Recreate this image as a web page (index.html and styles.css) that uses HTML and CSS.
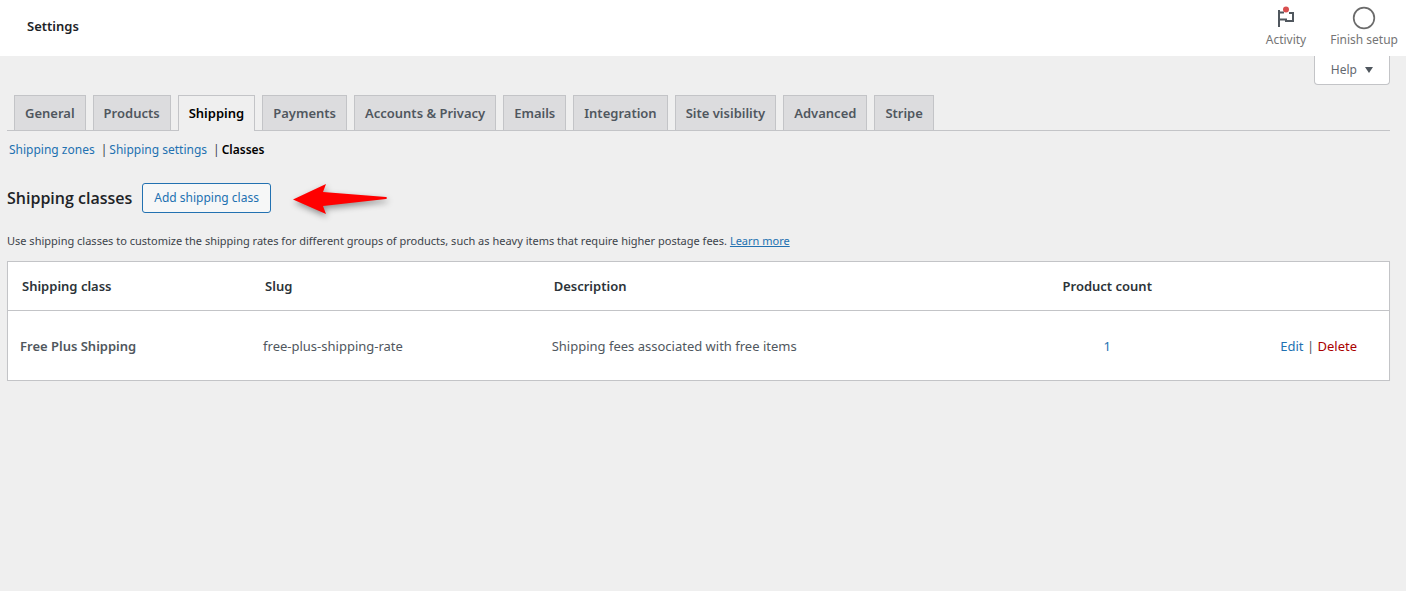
FILE: index.html
```html
<!DOCTYPE html>
<html lang="en">
<head>
<meta charset="utf-8">
<meta name="viewport" content="width=device-width, initial-scale=1">
<title>Settings</title>
<link rel="stylesheet" href="styles.css">
</head>
<body>
<header class="topbar">
  <h1 class="topbar-title">Settings</h1>
  <div class="topbar-actions">
    <button type="button" class="topbar-button">
      <svg class="topbar-icon" viewBox="0 0 24 24" aria-hidden="true">
        <path d="M5 4v17M5 6.500h5M5 13.500h7V15h7V7h-4" fill="none" stroke="#50575e" stroke-width="2"/>
        <circle cx="12" cy="3.500" r="3" fill="#d94f4f"/>
      </svg>
      <span>Activity</span>
    </button>
    <button type="button" class="topbar-button">
      <svg class="topbar-icon" viewBox="0 0 24 24" aria-hidden="true">
        <circle cx="12" cy="12" r="10.300" fill="none" stroke="#6b6b6b" stroke-width="1.700"/>
      </svg>
      <span>Finish setup</span>
    </button>
  </div>
</header>
<div class="screen-meta">
  <button type="button" class="help-button">Help
    <svg class="help-caret" viewBox="0 0 8 6" aria-hidden="true"><path d="M0 0h8L4 6z" fill="#50575e"/></svg>
  </button>
</div>
<main class="content">
  <nav class="tabs" aria-label="Settings sections">
    <a class="tab" href="#">General</a>
    <a class="tab" href="#">Products</a>
    <a class="tab tab-active" href="#" aria-current="page">Shipping</a>
    <a class="tab" href="#">Payments</a>
    <a class="tab" href="#">Accounts &amp; Privacy</a>
    <a class="tab" href="#">Emails</a>
    <a class="tab" href="#">Integration</a>
    <a class="tab" href="#">Site visibility</a>
    <a class="tab" href="#">Advanced</a>
    <a class="tab" href="#">Stripe</a>
  </nav>
  <ul class="subnav">
    <li><a href="#">Shipping zones</a><span class="subnav-bar">|</span></li>
    <li><a href="#">Shipping settings</a><span class="subnav-bar">|</span></li>
    <li><a class="subnav-current" href="#" aria-current="page">Classes</a></li>
  </ul>
  <div class="heading-row">
    <h2 class="heading">Shipping classes</h2>
    <button type="button" class="add-button">Add shipping class</button>
    <svg class="arrow" viewBox="0 0 95 30" aria-hidden="true"><path d="M0 16.500 33 1 30 9 93 14Q95 15 93 16L30 23 33 31z" fill="#f00"/></svg>
  </div>
  <p class="intro">Use shipping classes to customize the shipping rates for different groups of products, such as heavy items that require higher postage fees. <a href="#">Learn more</a></p>
  <table class="classes">
    <colgroup>
      <col class="col-name"><col class="col-slug"><col class="col-description"><col class="col-count"><col class="col-actions">
    </colgroup>
    <thead>
      <tr><th>Shipping class</th><th>Slug</th><th>Description</th><th class="count">Product count</th><td></td></tr>
    </thead>
    <tbody>
      <tr>
        <td class="name">Free Plus Shipping</td>
        <td>free-plus-shipping-rate</td>
        <td>Shipping fees associated with free items</td>
        <td class="count"><a href="#">1</a></td>
        <td class="actions"><a href="#">Edit</a> | <a class="delete" href="#">Delete</a></td>
      </tr>
    </tbody>
  </table>
</main>
</body>
</html>
```
FILE: styles.css
```css
* {
  box-sizing: border-box;
}

body {
  margin: 0;
  background: #efefef;
  color: #3c434a;
  font: 12px/20px "Segoe UI", "Noto Sans", sans-serif;
}

button {
  font: inherit;
  cursor: pointer;
}

a {
  color: #2271b1;
  text-decoration: none;
}

.topbar {
  display: flex;
  justify-content: space-between;
  height: 56px;
  padding: 0 8px 0 27px;
  background: #fff;
}

.topbar-title {
  margin: 0;
  padding-top: 16px;
  color: #1d2327;
  font-size: 13px;
  font-weight: 600;
  line-height: 20px;
}

.topbar-actions {
  display: flex;
  gap: 24px;
}

.topbar-button {
  display: flex;
  flex-direction: column;
  align-items: center;
  padding: 6px 0 0;
  border: 0;
  background: none;
  color: #757575;
}

.topbar-icon {
  width: 24px;
  height: 24px;
}

.screen-meta {
  display: flex;
  justify-content: flex-end;
  padding-right: 16px;
}

.help-button {
  display: flex;
  align-items: center;
  gap: 8px;
  height: 29px;
  padding: 0 16px;
  border: 1px solid #c3c4c7;
  border-top: 0;
  border-radius: 0 0 4px 4px;
  background: #fff;
  color: #646970;
}

.help-caret {
  width: 8px;
  height: 6px;
}

.content {
  padding: 10px 16px 0 7px;
}

.tabs {
  display: flex;
  gap: 7px;
  padding-left: 7px;
  border-bottom: 1px solid #c3c4c7;
}

.tab {
  padding: 5px 10px;
  border: 1px solid #c3c4c7;
  border-bottom: 0;
  background: #dcdcde;
  color: #50575e;
  font-size: 13px;
  font-weight: 600;
  line-height: 25px;
  height: 35px;
  white-space: nowrap;
}

.tab-active {
  height: 36px;
  margin-bottom: -1px;
  background: #efefef;
  color: #000;
}

.subnav {
  display: flex;
  gap: 2px;
  margin: 9px 0 0;
  padding: 0 0 0 2px;
  list-style: none;
}

.subnav-bar {
  margin-left: 6px;
}

.subnav-current {
  color: #000;
  font-weight: 600;
}

.heading-row {
  display: flex;
  align-items: center;
  margin-top: 23px;
}

.heading {
  margin: 0;
  color: #1d2327;
  font-family: "Segoe UI", "Open Sans", sans-serif;
  font-size: 16px;
  font-weight: 600;
  line-height: 24px;
}

.add-button {
  height: 30px;
  margin-left: 10px;
  padding: 0 11px;
  border: 1px solid #2271b1;
  border-radius: 3px;
  background: #f6f7f7;
  color: #2271b1;
}

.arrow {
  width: 95px;
  height: 30px;
  margin-left: 22px;
  overflow: visible;
  filter: drop-shadow(1px 3px 3px rgba(0, 0, 0, 0.4));
}

.intro {
  margin: 18px 0 10px;
  font-size: 11px;
}

.intro a {
  text-decoration: underline;
}

.classes {
  width: 100%;
  border: 1px solid #c3c4c7;
  border-spacing: 0;
  background: #fff;
  box-shadow: 0 1px 1px rgba(0, 0, 0, 0.04);
  font-size: 13px;
  table-layout: fixed;
}

.col-name {
  width: 17.6%;
}

.col-slug {
  width: 20.9%;
}

.col-description {
  width: 32%;
}

.col-count {
  width: 18.2%;
}

.classes th {
  padding: 14px;
  color: #2c3338;
  font-weight: 600;
  text-align: left;
}

.classes thead th,
.classes thead td {
  border-bottom: 1px solid #c3c4c7;
}

.classes tbody td {
  padding: 25px 12px 24px;
  color: #50575e;
}

.classes .name {
  font-weight: 600;
}

.classes .count {
  text-align: center;
}

.classes tbody .actions {
  padding-right: 32px;
  text-align: right;
}

.classes .delete {
  color: #a00;
}
```
